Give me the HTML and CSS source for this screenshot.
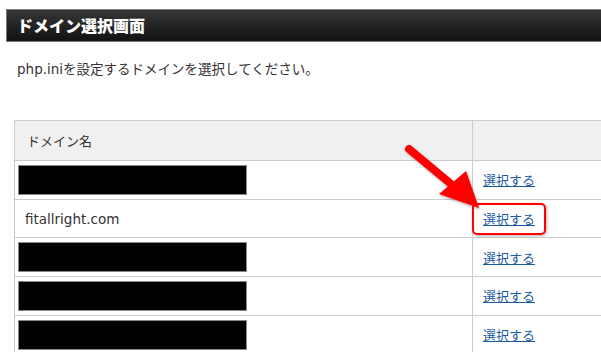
FILE: index.html
```html
<!DOCTYPE html>
<html lang="ja">
<head>
  <meta charset="UTF-8">
  <title>ドメイン選択画面</title>
  <link rel="stylesheet" href="styles.css">
</head>
<body>
  <!-- Page title bar -->
  <h1 class="page-title">ドメイン選択画面</h1>

  <p class="lead">php.iniを設定するドメインを選択してください。</p>

  <!-- Domain list -->
  <table class="domains">
    <tr>
      <th class="col-name">ドメイン名</th>
      <th class="col-action"></th>
    </tr>
    <tr>
      <td><span class="redacted"></span></td>
      <td class="col-action"><a href="#">選択する</a></td>
    </tr>
    <tr>
      <td class="domain">fitallright.com</td>
      <td class="col-action"><span class="mark"><a href="#">選択する</a></span></td>
    </tr>
    <tr>
      <td><span class="redacted"></span></td>
      <td class="col-action"><a href="#">選択する</a></td>
    </tr>
    <tr>
      <td><span class="redacted"></span></td>
      <td class="col-action"><a href="#">選択する</a></td>
    </tr>
    <tr>
      <td><span class="redacted"></span></td>
      <td class="col-action"><a href="#">選択する</a></td>
    </tr>
  </table>

  <!-- Pointer arrow -->
  <svg class="arrow" width="90" height="80" viewBox="0 0 90 80">
    <defs>
      <filter id="shadow" x="-20%" y="-20%" width="140%" height="140%">
        <feDropShadow dx="1" dy="1.5" stdDeviation="1.2" flood-color="#000" flood-opacity="0.35"/>
      </filter>
    </defs>
    <g filter="url(#shadow)">
      <line x1="8" y1="8" x2="50" y2="43" stroke="#ff0000" stroke-width="8" stroke-linecap="round"/>
      <polygon points="38,53 65,30 78,67" fill="#ff0000"/>
    </g>
  </svg>
</body>
</html>
```

FILE: styles.css
```css
body {
  font-family: "DejaVu Sans", "Noto Sans CJK JP", sans-serif;
  font-size: 13.5px;
  color: #333;
  background: #fff;
  margin: 0;
  padding: 9px 0 0 6px;
  overflow: hidden;
  position: relative;
}

.page-title {
  margin: 0;
  height: 31px;
  line-height: 31px;
  padding-left: 10px;
  font-family: "Noto Sans CJK JP", sans-serif;
  font-size: 16px;
  font-weight: 900;
  color: #fff;
  background: linear-gradient(#363636, #121212);
  border: 1px solid #7a7a7a;
  border-right: none;
  width: 700px;
}

.lead {
  margin: 15px 0 0 11px;
  line-height: 24px;
}

.domains {
  margin: 39px 0 0 8px;
  border-collapse: collapse;
  width: 680px;
}

.domains th,
.domains td {
  border: 1px solid #cccccc;
  text-align: left;
  padding: 0 0 0 10px;
  height: 37.7px;
  vertical-align: middle;
}

.domains th {
  background: #f0f0f0;
  font-family: "Noto Sans CJK JP", sans-serif;
  font-size: 13px;
  font-weight: normal;
  height: 39px;
  padding-left: 12px;
}

.col-name {
  width: 445px;
}

.domains td:first-child {
  padding-left: 3px;
}

.domains td.domain {
  padding-left: 10px;
}

.redacted {
  display: block;
  width: 227px;
  height: 28px;
  background: #000;
  border: 1px solid #8a8a8a;
}

.domains a {
  color: #1a5a9f;
  text-decoration: underline;
  font-family: "Noto Sans CJK JP", sans-serif;
  font-size: 13px;
}

.mark {
  position: relative;
}

.mark::before {
  content: "";
  position: absolute;
  left: -11px;
  right: -11px;
  top: -8px;
  bottom: -8px;
  border: 2.5px solid #ff0000;
  border-radius: 5px;
  box-shadow: 1px 1px 3px rgba(0, 0, 0, 0.3);
}

.arrow {
  position: absolute;
  left: 401px;
  top: 141px;
}
```
